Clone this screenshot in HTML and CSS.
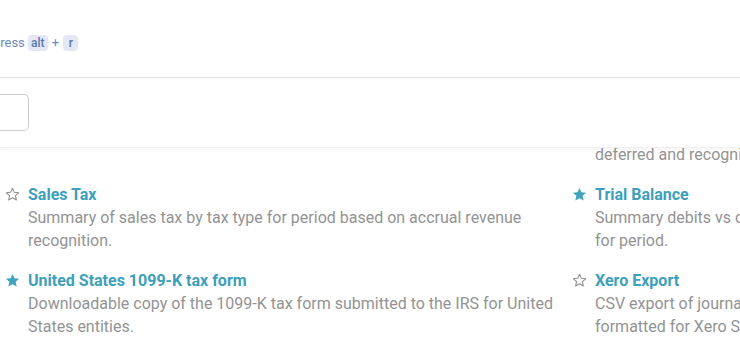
FILE: index.html
```html
<!DOCTYPE html>
<html>
<head>
<meta charset="utf-8">
<link rel="stylesheet" href="styles.css">
</head>
<body>
<div class="page">
  <header class="header">
    <div class="hint">Press <span class="kbd">alt</span> <span class="plus">+</span> <span class="kbd">r</span></div>
  </header>
  <div class="search-row">
    <div class="search-box"></div>
  </div>
  <div class="list-viewport">
    <div class="list">
      <div class="item">
        <span class="star"><svg viewBox="0 0 16 16" width="15" height="15"><path class="outline" d="M8 1.4l1.95 4.3 4.65.45-3.5 3.1 1.02 4.6L8 11.5l-4.12 2.35 1.02-4.6-3.5-3.1 4.65-.45z"/></svg></span>
        <div class="body">
          <div class="title">Revenue Summary</div>
          <div class="desc">Summary of recognized revenue for period.</div>
        </div>
      </div>
      <div class="item">
        <span class="star"><svg viewBox="0 0 16 16" width="15" height="15"><path class="outline" d="M8 1.4l1.95 4.3 4.65.45-3.5 3.1 1.02 4.6L8 11.5l-4.12 2.35 1.02-4.6-3.5-3.1 4.65-.45z"/></svg></span>
        <div class="body">
          <div class="title">Revenue Waterfall</div>
          <div class="desc">Schedule of revenue by customer showing amounts<br>deferred and recognized over time.</div>
        </div>
      </div>
      <div class="item">
        <span class="star"><svg viewBox="0 0 16 16" width="15" height="15"><path class="outline" d="M8 1.4l1.95 4.3 4.65.45-3.5 3.1 1.02 4.6L8 11.5l-4.12 2.35 1.02-4.6-3.5-3.1 4.65-.45z"/></svg></span>
        <div class="body">
          <div class="title">Sales Tax</div>
          <div class="desc">Summary of sales tax by tax type for period based on accrual revenue recognition.</div>
        </div>
      </div>
      <div class="item">
        <span class="star"><svg viewBox="0 0 16 16" width="15" height="15"><path class="filled" d="M8 1l2.1 4.6 5 .5-3.75 3.35 1.1 4.950L8 11.9l-4.45 2.5 1.1-4.95L.9 6.1l5-.5z"/></svg></span>
        <div class="body">
          <div class="title">Trial Balance</div>
          <div class="desc">Summary debits vs credits by account with opening and closing balances<br>for period.</div>
        </div>
      </div>
      <div class="item">
        <span class="star"><svg viewBox="0 0 16 16" width="15" height="15"><path class="filled" d="M8 1l2.1 4.6 5 .5-3.75 3.35 1.1 4.95L8 11.9l-4.45 2.5 1.1-4.95L.9 6.1l5-.5z"/></svg></span>
        <div class="body">
          <div class="title">United States 1099-K tax form</div>
          <div class="desc">Downloadable copy of the 1099-K tax form submitted to the IRS for United States entities.</div>
        </div>
      </div>
      <div class="item">
        <span class="star"><svg viewBox="0 0 16 16" width="15" height="15"><path class="outline" d="M8 1.4l1.95 4.3 4.65.45-3.5 3.1 1.02 4.6L8 11.5l-4.12 2.35 1.02-4.6-3.5-3.1 4.65-.45z"/></svg></span>
        <div class="body">
          <div class="title">Xero Export</div>
          <div class="desc">CSV export of journal entries for period<br>formatted for Xero Small Business import.</div>
        </div>
      </div>
    </div>
  </div>
</div>
</body>
</html>
```

FILE: styles.css
```css
html, body {
  margin: 0;
  padding: 0;
  background: #fff;
  overflow: hidden;
  width: 740px;
  height: 364px;
}
.page {
  font-family: Roboto, "Liberation Sans", sans-serif;
  width: 740px;
}
.header {
  height: 78px;
  box-sizing: border-box;
  padding-top: 34px;
  border-bottom: 1px solid #dedede;
}
.hint {
  margin-left: -8px;
  font-size: 13px;
  line-height: 18px;
  color: #6f8cb8;
  white-space: nowrap;
}
.kbd {
  display: inline-block;
  box-sizing: border-box;
  min-width: 15px;
  text-align: center;
  background: #e3e8f4;
  color: #5a77ab;
  border-radius: 4px;
  padding: 0 3px;
  font-size: 12px;
  line-height: 16px;
  font-weight: 500;
}
.plus {
  padding: 0 1px;
}
.search-row {
  padding: 16px 0 16px 0;
  border-bottom: 1px solid #f0f0f0;
  box-shadow: 0 2px 3px rgba(0,0,0,0.04);
  position: relative;
  z-index: 1;
}
.search-box {
  width: 29px;
  height: 37px;
  box-sizing: border-box;
  border: 1px solid #cccccc;
  border-left: none;
  border-radius: 0 5px 5px 0;
}
.list-viewport {
  height: 216px;
  overflow: hidden;
}
.list {
  margin-top: -51px;
  padding-left: 5px;
  display: grid;
  grid-template-columns: 567px 567px;
  row-gap: 17px;
}
.item {
  display: flex;
  align-items: flex-start;
}
.star {
  width: 23px;
  flex: none;
  height: 23px;
  display: flex;
  align-items: center;
}
.star svg {
  display: block;
}
.outline {
  fill: none;
  stroke: #8e8e8e;
  stroke-width: 1.1;
  stroke-linejoin: round;
}
.filled {
  fill: #42a3c1;
}
.body {
  width: 535px;
}
.title {
  font-size: 16px;
  font-weight: 700;
  line-height: 23px;
  color: #3d9fbb;
  white-space: nowrap;
}
.desc {
  font-size: 16px;
  line-height: 23px;
  color: #939393;
}
```
